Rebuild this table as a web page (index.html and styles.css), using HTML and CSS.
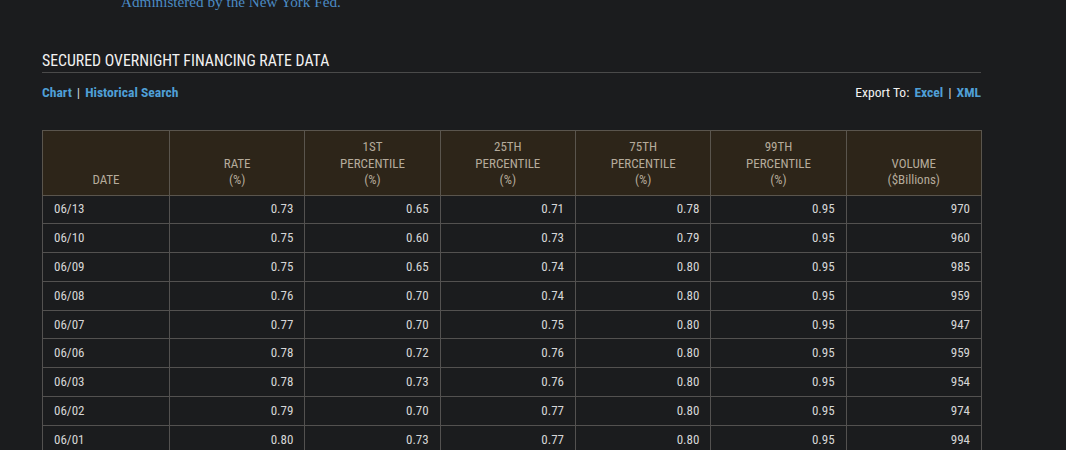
FILE: index.html
```html
<!DOCTYPE html>
<html>
<head>
<meta charset="utf-8">
<link rel="stylesheet" href="styles.css">
</head>
<body>
<div class="page">
  <p class="admin">Administered by the New York Fed.</p>
  <h2 class="title">SECURED OVERNIGHT FINANCING RATE DATA</h2>
  <div class="links">
    <div class="left"><a>Chart</a><span class="sep">|</span><a>Historical Search</a></div>
    <div class="right"><span class="exp">Export To:</span><a>Excel</a><span class="sep">|</span><a>XML</a></div>
  </div>
  <table class="data">
    <thead>
      <tr>
        <th class="c-date">DATE</th>
        <th>RATE<br>(%)</th>
        <th>1ST<br>PERCENTILE<br>(%)</th>
        <th>25TH<br>PERCENTILE<br>(%)</th>
        <th>75TH<br>PERCENTILE<br>(%)</th>
        <th>99TH<br>PERCENTILE<br>(%)</th>
        <th>VOLUME<br>($Billions)</th>
      </tr>
    </thead>
    <tbody>
      <tr><td>06/13</td><td>0.73</td><td>0.65</td><td>0.71</td><td>0.78</td><td>0.95</td><td>970</td></tr>
      <tr><td>06/10</td><td>0.75</td><td>0.60</td><td>0.73</td><td>0.79</td><td>0.95</td><td>960</td></tr>
      <tr><td>06/09</td><td>0.75</td><td>0.65</td><td>0.74</td><td>0.80</td><td>0.95</td><td>985</td></tr>
      <tr><td>06/08</td><td>0.76</td><td>0.70</td><td>0.74</td><td>0.80</td><td>0.95</td><td>959</td></tr>
      <tr><td>06/07</td><td>0.77</td><td>0.70</td><td>0.75</td><td>0.80</td><td>0.95</td><td>947</td></tr>
      <tr><td>06/06</td><td>0.78</td><td>0.72</td><td>0.76</td><td>0.80</td><td>0.95</td><td>959</td></tr>
      <tr><td>06/03</td><td>0.78</td><td>0.73</td><td>0.76</td><td>0.80</td><td>0.95</td><td>954</td></tr>
      <tr><td>06/02</td><td>0.79</td><td>0.70</td><td>0.77</td><td>0.80</td><td>0.95</td><td>974</td></tr>
      <tr><td>06/01</td><td>0.80</td><td>0.73</td><td>0.77</td><td>0.80</td><td>0.95</td><td>994</td></tr>
    </tbody>
  </table>
</div>
</body>
</html>
```
FILE: styles.css
```css
html, body {
  margin: 0;
  padding: 0;
  background: #1b1c1e;
  overflow: hidden;
}
.page {
  width: 939px;
  margin-left: 42px;
  font-family: "Liberation Sans Narrow", "Roboto Condensed", Roboto, sans-serif;
}
.admin {
  margin: -7px 0 0 79px;
  font-family: "Liberation Serif", serif;
  font-size: 15.2px;
  line-height: 18px;
  color: #4b8bc4;
}
.title {
  margin: 41px 0 0;
  font-size: 15.8px;
  font-weight: normal;
  color: #f2f2f2;
  line-height: 18px;
  padding-bottom: 2px;
  border-bottom: 1px solid #4a4a4a;
}
.links {
  display: flex;
  justify-content: space-between;
  align-items: center;
  margin-top: 11px;
  font-size: 13.6px;
  line-height: 16px;
}
.links a {
  color: #4f9fd6;
  font-weight: bold;
}
.links .sep {
  color: #cfd8df;
  margin: 0 5px;
}
.links .exp {
  color: #f2f2f2;
  margin-right: 5px;
}
.data {
  margin-top: 30px;
  width: 940px;
  border-collapse: collapse;
  font-size: 13px;
  table-layout: fixed;
}
.data th, .data td {
  border: 1px solid #535150;
}
.data th {
  background: #2d2519;
  color: #b5ab9b;
  font-weight: normal;
  height: 48px;
  vertical-align: bottom;
  line-height: 16.5px;
  padding: 8px 6px 6px;
  text-align: center;
  border-color: #5a554d;
}
.data th.c-date {
  width: 114px;
}
.data td {
  height: 27.8px;
  padding: 0 11px;
  color: #d6d6d6;
  text-align: right;
  line-height: 16px;
}
.data td:first-child {
  text-align: left;
}
```
